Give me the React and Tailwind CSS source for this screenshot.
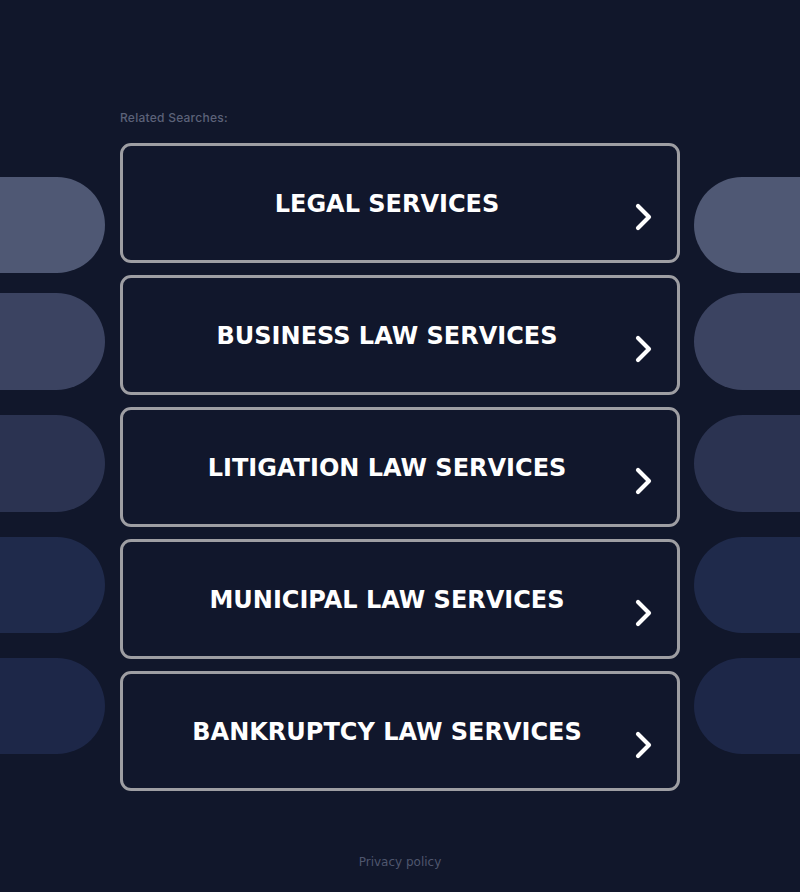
const searches = [
  "LEGAL SERVICES",
  "BUSINESS LAW SERVICES",
  "LITIGATION LAW SERVICES",
  "MUNICIPAL LAW SERVICES",
  "BANKRUPTCY LAW SERVICES",
];

// side decorations: colour + top margin + height
const pills = [
  { color: "bg-[#4f5874]", mt: "mt-[177px]", h: "h-[96px]" },
  { color: "bg-[#3b4361]", mt: "mt-[20px]", h: "h-[97px]" },
  { color: "bg-[#2b3351]", mt: "mt-[25px]", h: "h-[97px]" },
  { color: "bg-[#1f2a4b]", mt: "mt-[25px]", h: "h-[96px]" },
  { color: "bg-[#1d2748]", mt: "mt-[25px]", h: "h-[96px]" },
];

const Chevron = () => (
  <svg width="22" height="30" viewBox="0 0 22 30" fill="none">
    <path d="M5 4 L16 15 L5 26" stroke="#ffffff" strokeWidth="4.2" strokeLinecap="round" strokeLinejoin="round" />
  </svg>
);

const SearchLink = ({ label }) => (
  <a
    href="#"
    className="relative flex items-center justify-center h-[120px] rounded-[11px] border-[3px] border-[#9e9ea3] bg-[#11172c] pr-[26px] pt-[2px]"
  >
    <span className="text-white text-[24px] font-bold font-['DejaVu_Sans',sans-serif]">{label}</span>
    <span className="absolute right-[22px] top-[56px]">
      <Chevron />
    </span>
  </a>
);

export default function App() {
  return (
    <div className="flex min-h-[892px] w-full bg-[#11172b] overflow-hidden">
      {/* left pills */}
      <div className="flex flex-col w-[105px] shrink-0">
        {pills.map((p, i) => (
          <div key={i} className={`${p.mt} ${p.h} ${p.color} rounded-r-full`} />
        ))}
      </div>

      {/* main column */}
      <div className="flex flex-col w-[560px] shrink-0 ml-[15px] pt-[110px]">
        <div className="text-[12px] leading-[16px] text-[#5c6279] font-['Inter',sans-serif] font-medium tracking-[0.25px]">
          Related Searches:
        </div>
        <div className="flex flex-col gap-[12px] mt-[17px]">
          {searches.map((s) => (
            <SearchLink key={s} label={s} />
          ))}
        </div>
        <div className="mt-[63px] text-center text-[12px] leading-[16px] text-[#4f566e] font-['DejaVu_Sans',sans-serif]">
          Privacy policy
        </div>
      </div>

      {/* right pills */}
      <div className="flex flex-col flex-1 ml-[14px]">
        {pills.map((p, i) => (
          <div key={i} className={`${p.mt} ${p.h} ${p.color} rounded-l-full w-full`} />
        ))}
      </div>
    </div>
  );
}
